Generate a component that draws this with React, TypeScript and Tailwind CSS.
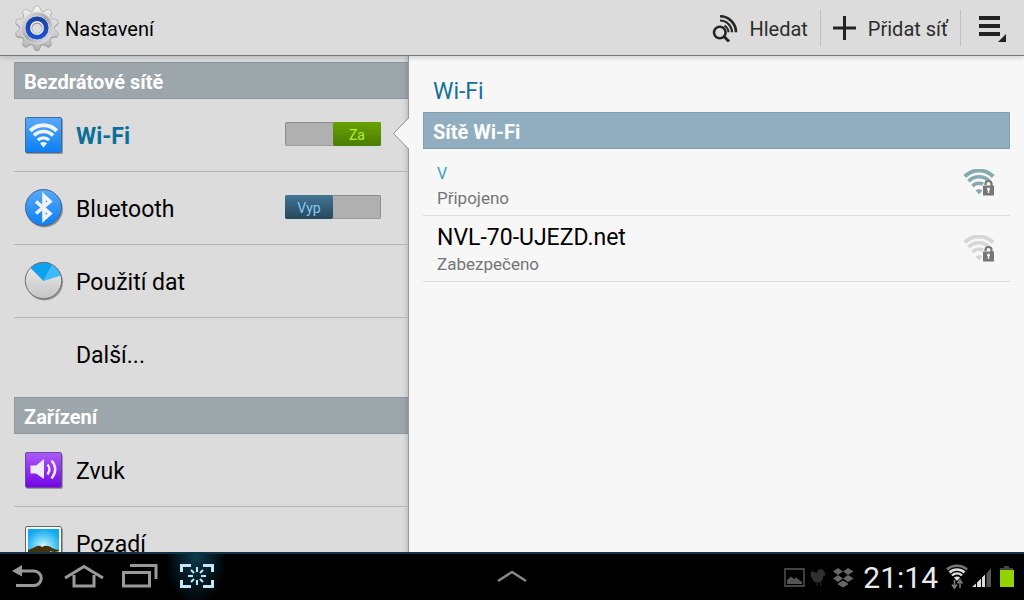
import React, { useState } from "react";

const polar = (cx: number, cy: number, r: number, deg: number) => {
  const a = (deg * Math.PI) / 180;
  return `${(cx + r * Math.cos(a)).toFixed(2)} ${(cy + r * Math.sin(a)).toFixed(2)}`;
};

// Ten-toothed wheel outline
const gearPath = () => {
  const parts: string[] = [];
  for (let i = 0; i < 10; i++) {
    const a = -90 + i * 36;
    parts.push(
      `${i === 0 ? "M" : "L"}${polar(23, 23, 18, a - 12)}`,
      `L${polar(23, 23, 21, a - 7)}`,
      `Q${polar(23, 23, 22.5, a - 5)} ${polar(23, 23, 22, a)}`,
      `Q${polar(23, 23, 22.5, a + 5)} ${polar(23, 23, 21, a + 7)}`,
      `L${polar(23, 23, 18, a + 12)}`,
      `Q${polar(23, 23, 16.5, a + 18)} ${polar(23, 23, 18, a + 24)}`
    );
  }
  return parts.join(" ") + "Z";
};

const GearIcon = () => (
  <svg width="46" height="46" viewBox="0 0 46 46" className="mt-px" aria-hidden="true">
    <defs>
      <linearGradient id="gearBody" x1="0" y1="0" x2="0" y2="1">
        <stop offset="0" stopColor="#f4f4f4" />
        <stop offset="1" stopColor="#b4b4b4" />
      </linearGradient>
      <linearGradient id="gearPlate" x1="0" y1="0" x2="1" y2="1">
        <stop offset="0" stopColor="#e8e8e8" />
        <stop offset="0.5" stopColor="#a8a8a8" />
        <stop offset="1" stopColor="#f0f0f0" />
      </linearGradient>
      <linearGradient id="gearRing" x1="0" y1="0" x2="0" y2="1">
        <stop offset="0" stopColor="#1d3f9c" />
        <stop offset="1" stopColor="#1c53d8" />
      </linearGradient>
    </defs>
    <path d={gearPath()} transform="translate(0 1)" fill="#777" opacity="0.6" />
    <path d={gearPath()} fill="url(#gearBody)" stroke="#a0a0a0" strokeWidth="0.6" />
    <circle cx="23" cy="23" r="16" fill="url(#gearPlate)" stroke="#d8d8d8" />
    <circle cx="23" cy="23" r="12" fill="url(#gearRing)" stroke="#dfe4ee" strokeWidth="0.8" />
    <circle cx="23" cy="23" r="6.2" fill="#8d94a2" stroke="#f2f2f2" strokeWidth="1.4" />
    <circle cx="23" cy="23.5" r="4.8" fill="#dcdcdc" />
  </svg>
);

const ScanIcon = () => (
  <svg width="26" height="28" viewBox="0 0 26 28" fill="none" stroke="#262626" aria-hidden="true">
    <circle cx="7.800" cy="18.500" r="5.800" strokeWidth="2.600" />
    <path d="M12 22.500L17 27.500" strokeWidth="3" />
    <path d="M8 2.300A16 16 0 0 1 24 18.300" strokeWidth="2.600" />
    <path d="M8 6.500A12 12 0 0 1 20 18.300" strokeWidth="2.200" />
    <path d="M12.500 11.500A8.500 8.500 0 0 1 16.500 18.300" strokeWidth="2" />
  </svg>
);

const WifiIcon = () => (
  <svg width="40" height="40" viewBox="0 0 40 40" fill="none" aria-hidden="true">
    <defs>
      <linearGradient id="blueTile" x1="0" y1="0" x2="0" y2="1">
        <stop offset="0" stopColor="#5aa9f8" />
        <stop offset="1" stopColor="#0a80f5" />
      </linearGradient>
    </defs>
    <rect x="2" y="4" width="37" height="35" rx="1" fill="#000" opacity="0.3" />
    <rect x="1.500" y="2.500" width="36" height="35" rx="1" fill="url(#blueTile)" stroke="#3d6a99" />
    <g stroke="#f2f4f7">
      <path d="M6.300 15.800A18.500 18.500 0 0 1 32.700 15.800" strokeWidth="4" />
      <path d="M10 20.600A13.200 13.200 0 0 1 29 20.600" strokeWidth="3.600" />
      <path d="M13.800 25.200A8 8 0 0 1 25.200 25.200" strokeWidth="3.200" />
    </g>
    <path d="M16 28.200Q19.500 25.600 23 28.200L19.500 32.500Z" fill="#f2f4f7" />
  </svg>
);

const BluetoothIcon = () => (
  <svg width="40" height="40" viewBox="0 0 40 40" fill="none" aria-hidden="true">
    <circle cx="20.500" cy="21" r="18.500" fill="#000" opacity="0.350" />
    <circle cx="19.500" cy="19.500" r="18" fill="url(#blueTile)" stroke="#45678c" />
    <path d="M12 13.500L26 25.500L20 31V8L26 13.500L12 25.500" stroke="#f2f4f7" strokeWidth="3.600" />
  </svg>
);

const DataIcon = () => (
  <svg width="40" height="40" viewBox="0 0 40 40" aria-hidden="true">
    <defs>
      <linearGradient id="dataBody" x1="0" y1="0" x2="0" y2="1">
        <stop offset="0" stopColor="#eee" />
        <stop offset="1" stopColor="#c4c4c4" />
      </linearGradient>
    </defs>
    <circle cx="20.500" cy="21" r="18.500" opacity="0.350" />
    <circle cx="19.500" cy="19.500" r="18.500" fill="url(#dataBody)" />
    <path d="M19.500 20L6.500 7A18 18 0 0 1 28.500 3.700Z" fill="#0da2f0" />
    <path d="M19.500 20L28.500 3.700A18.500 18.500 0 0 1 37 14.500Z" fill="#3cb9f8" />
    <circle cx="19.500" cy="19.500" r="18.200" fill="none" stroke="#6d6d6d" />
  </svg>
);

const SoundIcon = () => (
  <svg width="40" height="40" viewBox="0 0 40 40" fill="none" aria-hidden="true">
    <defs>
      <linearGradient id="purpleTile" x1="0" y1="0" x2="0" y2="1">
        <stop offset="0" stopColor="#ad5cfa" />
        <stop offset="1" stopColor="#7104e4" />
      </linearGradient>
    </defs>
    <rect x="2" y="4" width="37" height="35" rx="2" fill="#000" opacity="0.300" />
    <rect x="1.500" y="2.500" width="36" height="35" rx="1.500" fill="url(#purpleTile)" stroke="#6a4a96" />
    <path d="M6.500 15.500H12L20 9V29L12 23.500H6.500Z" fill="#eee9f5" />
    <path d="M23.500 14.500Q27.500 19 23.500 24.500" stroke="#eee9f5" strokeWidth="2.400" />
    <path d="M27.500 10.500Q35 19 27.500 28.500" stroke="#eee9f5" strokeWidth="2.400" />
  </svg>
);

const WallpaperIcon = () => (
  <svg width="40" height="40" viewBox="0 0 40 40" aria-hidden="true">
    <defs>
      <radialGradient id="sunSky" cx="0.500" cy="0.600" r="0.600">
        <stop offset="0" stopColor="#fff" />
        <stop offset="0.250" stopColor="#9be6fc" />
        <stop offset="1" stopColor="#0fa9ee" />
      </radialGradient>
    </defs>
    <rect x="2" y="4" width="37" height="35" rx="2" opacity="0.300" />
    <rect x="1.500" y="2.500" width="36" height="35" rx="1.500" fill="#f7f7f7" stroke="#666" />
    <rect x="4" y="5" width="31" height="30" fill="url(#sunSky)" />
    <path d="M4 26Q9 24 12 22.500Q15 21 18 23Q23 20 28 24Q32 26 35 26V35H4Z" fill="#43330f" />
    <path d="M26 35V27Q30 29 35 27V35Z" fill="#d9d9d9" />
  </svg>
);

const NetworkIcon = ({ color }: { color: string }) => (
  <svg width="32" height="28" viewBox="0 0 32 28" fill="none" aria-hidden="true">
    <g stroke={color}>
      <path d="M1.800 7.500A20 20 0 0 1 30.200 7.500" strokeWidth="4" />
      <path d="M5.500 12.300A14.500 14.500 0 0 1 26.500 12.300" strokeWidth="3.600" />
      <path d="M9.500 17A9 9 0 0 1 22.500 17" strokeWidth="3.400" />
    </g>
    <path d="M12.500 21.500Q16 18.500 19.500 21.500L16 25.500Z" fill={color} />
    <path d="M19 16.500L22 12.500H31V27H19Z" fill="#f7f7f7" />
    <path d="M22.500 16V15A3 3 0 0 1 28.500 15V17" stroke="#777" strokeWidth="2.200" />
    <path d="M20 16.500H31V26.500H20Z" fill="#777" />
    <path d="M25.500 19.500V24" stroke="#f7f7f7" strokeWidth="1.400" />
    <circle cx="25.500" cy="20" r="1.500" fill="#f7f7f7" />
  </svg>
);

const Switch = ({ initial, label }: { initial: boolean; label: string }) => {
  const [on, setOn] = useState(initial);

  return (
    <button
      type="button"
      role="switch"
      aria-checked={on}
      aria-label={label}
      onClick={() => setOn(!on)}
      className={`mr-[27px] mb-0.5 flex h-6 w-24 shrink-0 rounded-xs border border-[#8c8c8c] border-b-[#9c9c9c] bg-[#b0b0b0] ${on ? "justify-end" : "justify-start"}`}
    >
      <span
        className={`-my-px h-6 w-12 rounded-xs text-center text-sm leading-[26px] ${
          on
            ? "-mr-px bg-linear-to-b from-[#68a303] to-[#4a7d02] text-[#b3f02c]"
            : "-ml-px bg-linear-to-b from-[#437595] to-[#26485c] text-[#87c8ee]"
        }`}
      >
        {on ? "Za" : "Vyp"}
      </span>
    </button>
  );
};

// Arrow that ties the selected row to the detail pane
const Notch = () => (
  <svg className="absolute top-[18px] -right-px z-10" width="17" height="34" viewBox="0 0 17 34" aria-hidden="true">
    <path d="M17 1L2 16.500L17 32Z" fill="#f7f7f7" />
    <path d="M16.500 1L2.500 15.500Q1.500 16.500 2.500 17.500L16.500 32" fill="none" stroke="#939393" />
  </svg>
);

interface SettingItem {
  name: string;
  icon?: React.ReactNode;
  selected?: boolean;
  state?: boolean;
}

const SettingsSection = ({ title, items }: { title: string; items: SettingItem[] }) => (
  <section className="pt-1.5 pl-3.5">
    <h2 className="flex h-[37px] items-center border border-r-0 border-[#8e989c] bg-[#9da6ab] pt-0.5 pl-[9px] text-xl font-bold text-white">
      {title}
    </h2>
    <ul>
      {items.map((item, i) => (
        <li
          key={item.name}
          className={`relative flex h-[73px] items-center ${i < items.length - 1 ? "border-b border-[#b4b4b4]" : ""}`}
        >
          <button
            type="button"
            className={`flex h-full flex-1 items-center gap-3 pl-2.5 text-left text-[23px] ${item.selected ? "font-bold text-[#0b6f99]" : "text-black"}`}
          >
            <span className="h-10 w-10">{item.icon}</span>
            <span className="pt-1">{item.name}</span>
          </button>
          {item.state !== undefined && <Switch initial={item.state} label={item.name} />}
          {item.selected && <Notch />}
        </li>
      ))}
    </ul>
  </section>
);

const wireless: SettingItem[] = [
  { name: "Wi-Fi", icon: <WifiIcon />, selected: true, state: true },
  { name: "Bluetooth", icon: <BluetoothIcon />, state: false },
  { name: "Použití dat", icon: <DataIcon /> },
  { name: "Další..." },
];

const device: SettingItem[] = [
  { name: "Zvuk", icon: <SoundIcon /> },
  { name: "Pozadí", icon: <WallpaperIcon /> },
];

const Header = () => (
  <header className="relative z-20 flex h-14 shrink-0 items-center border-b border-[#777] bg-[#dcdcdc] pl-3.5 shadow-[0_1px_6px_rgba(0,0,0,0.2)]">
    <GearIcon />
    <h1 className="flex-1 pt-0.5 pl-[5px] text-xl text-black">Nastavení</h1>
    <div className="flex items-center text-xl text-[#2c2c2c]">
      <button type="button" className="flex h-9 items-center gap-[11px] border-r border-[#c0c0c0] pr-3">
        <ScanIcon />
        <span className="pt-0.5">Hledat</span>
      </button>
      <button type="button" className="flex h-9 items-center gap-3 border-r border-[#c0c0c0] px-3">
        <svg width="23" height="24" viewBox="0 0 23 24" fill="none" stroke="#222" strokeWidth="3" aria-hidden="true">
          <path d="M0 12H23M11.500 0V24" />
        </svg>
        <span className="pt-0.5">Přidat síť</span>
      </button>
      <button type="button" aria-label="Menu" className="pt-0.5 pr-[17px] pl-[18px]">
        <svg width="28" height="26" viewBox="0 0 28 26" fill="#222" aria-hidden="true">
          <path d="M0 0H21V4H0ZM0 8H21V12H0ZM0 16H21V20H0ZM27 18V26H19Z" />
        </svg>
      </button>
    </div>
  </header>
);

const networks = [
  { ssid: "V", status: "Připojeno", connected: true },
  { ssid: "NVL-70-UJEZD.net", status: "Zabezpečeno", connected: false },
];

const NetworkPane = () => (
  <section className="border-l border-[#999] bg-[#f7f7f7] px-3.5 pt-5 shadow-[-1px_0_5px_rgba(0,0,0,0.18)]">
    <h2 className="h-9 pl-2.5 text-[23px] leading-8 text-[#15719b]">Wi-Fi</h2>
    <h3 className="flex h-[37px] items-center border border-[#84a0b0] bg-[#90aec0] pt-0.5 pl-[9px] text-xl font-bold text-white">
      Sítě Wi-Fi
    </h3>
    <ul className="pt-px">
      {networks.map((n) => (
        <li key={n.ssid} className="h-[66px] border-b border-[#dcdcdc]">
          <button type="button" className="flex h-full w-full items-center pr-[15px] pl-3.5 text-left">
            <span className="flex flex-1 flex-col pt-0.5">
              <span className={n.connected ? "pt-1 text-base leading-6 text-[#2fa5c4]" : "text-[23px] leading-7 text-black"}>
                {n.ssid}
              </span>
              <span className="text-[17px] leading-6 text-[#757575]">{n.status}</span>
            </span>
            <NetworkIcon color={n.connected ? "#86aab2" : "#d6d8d8"} />
          </button>
        </li>
      ))}
    </ul>
  </section>
);

const StatusIcons = () => (
  <div className="flex items-center justify-self-end pr-2.5">
    <svg width="72" height="24" viewBox="0 0 72 24" fill="none" aria-hidden="true">
      <path d="M2 4H21V21H2Z" stroke="#444" strokeWidth="1.800" />
      <path d="M4 19V15L8 11.500L11 14L13 12.500L19 17V19Z" fill="#555" />
      <path d="M28 6L34 8Q34.500 4 38 4Q40.500 4 41 6.500L42.500 7L41.500 8.500L43 10L40.500 11Q40 17 35 17.500Q30.500 17.500 29.500 14Q27 12 28 6Z" fill="#303030" />
      <path d="M34 17V21M37.500 17V21" stroke="#2a2a2a" />
      <g fill="#686868">
        <path d="M55 3L60 6.500L55 10L50 6.500ZM65 3L70.500 6.500L65 10L60 6.500ZM55 10L60 13.500L55 17L50 13.500ZM65 10L70.500 13.500L65 17L60 13.500Z" />
        <path d="M60 15.500L65 18.500V19.500L60 22.500L55 19.500V18.500Z" />
      </g>
    </svg>
    <time className="px-2 text-[30px] text-[#eaeaea]">21:14</time>
    <svg width="68" height="26" viewBox="0 0 68 26" fill="none" aria-hidden="true">
      <path d="M1 5.500A15 15 0 0 1 21 5.500" stroke="#777" strokeWidth="2.600" />
      <path d="M3.500 8.500A11 11 0 0 1 18.500 8.500" stroke="#ddd" strokeWidth="2.400" />
      <path d="M6 11.500A7 7 0 0 1 16 11.500" stroke="#ddd" strokeWidth="2.400" />
      <path d="M7.800 13.500Q11 11.500 14.200 13.500L11 17Z" fill="#ddd" />
      <path d="M8.500 16V23M6 20.500L8.500 24L11 20.500M14 24V17M11.500 19.500L14 16L16.500 19.500" stroke="#777" strokeWidth="1.600" />
      <path d="M26 23L30 19.500V23ZM31 18.500L35 14.500V23H31ZM36 13.500L39 10.500V23H36Z" fill="#ddd" />
      <path d="M40.500 9.500L45 4V23H40.500Z" fill="#555" />
      <path d="M58 2H63V4H67V7H54V4H58Z" fill="#444" />
      <path d="M54 6H68V23H54Z" fill="#92d400" />
    </svg>
  </div>
);

const SystemBar = () => (
  <footer className="grid h-12 shrink-0 grid-cols-[1fr_auto_1fr] items-center border-t-2 border-[#123344] bg-black">
    <nav className="flex h-full">
      <button type="button" aria-label="Zpět" className="flex w-14 items-center justify-center pb-0.5">
        <svg width="32" height="24" viewBox="0 0 32 24" fill="none" aria-hidden="true">
          <path d="M9 7H22A7 7 0 0 1 22 21.500H4" stroke="#999" strokeWidth="3" />
          <path d="M0 7L10 1V12.500Z" fill="#999" />
        </svg>
      </button>
      <button type="button" aria-label="Domů" className="flex w-14 items-center justify-center pb-0.5">
        <svg width="40" height="24" viewBox="0 0 40 24" fill="none" stroke="#999" strokeWidth="3" aria-hidden="true">
          <path d="M1 14L20 2.500L39 14M10 11V22H30V11" />
        </svg>
      </button>
      <button type="button" aria-label="Poslední aplikace" className="flex w-14 items-center justify-center pb-0.5">
        <svg width="36" height="24" viewBox="0 0 36 24" fill="none" stroke="#999" strokeWidth="3" aria-hidden="true">
          <path d="M8 1.500H34V15M1.500 8.500H27.500V22H1.500Z" />
        </svg>
      </button>
      <button
        type="button"
        aria-label="Snímek obrazovky"
        className="flex w-14 items-center justify-center bg-radial-[at_50%_0%] from-[#0d3b50] to-black to-80% pb-0.5 pl-0.5"
      >
        <svg width="34" height="26" viewBox="0 0 34 26" fill="none" stroke="#bfe9f8" aria-hidden="true">
          <path d="M1.500 9V2.500H11M23 2.500H32.500V9M32.500 17V23.500H23M11 23.500H1.500V17" strokeWidth="3" />
          <path d="M17 4V9M17 17V22M8 13H13M21 13H26M11 7L14 10M23 7L20 10M11 19L14 16M23 19L20 16" strokeWidth="2" />
        </svg>
      </button>
    </nav>
    <button type="button" aria-label="Otevřít panel aplikací" className="pb-0.5">
      <svg width="30" height="12" viewBox="0 0 30 12" fill="none" stroke="#888" strokeWidth="2.400" aria-hidden="true">
        <path d="M1 11L15 2L29 11" />
      </svg>
    </button>
    <StatusIcons />
  </footer>
);

const App = () => (
  <div className="flex h-screen flex-col overflow-hidden bg-[#dcdcdc] font-['Roboto',sans-serif]">
    <Header />
    <main className="grid min-h-0 flex-1 grid-cols-[51fr_77fr] overflow-hidden">
      <aside>
        <SettingsSection title="Bezdrátové sítě" items={wireless} />
        <SettingsSection title="Zařízení" items={device} />
      </aside>
      <NetworkPane />
    </main>
    <SystemBar />
  </div>
);

export default App;
